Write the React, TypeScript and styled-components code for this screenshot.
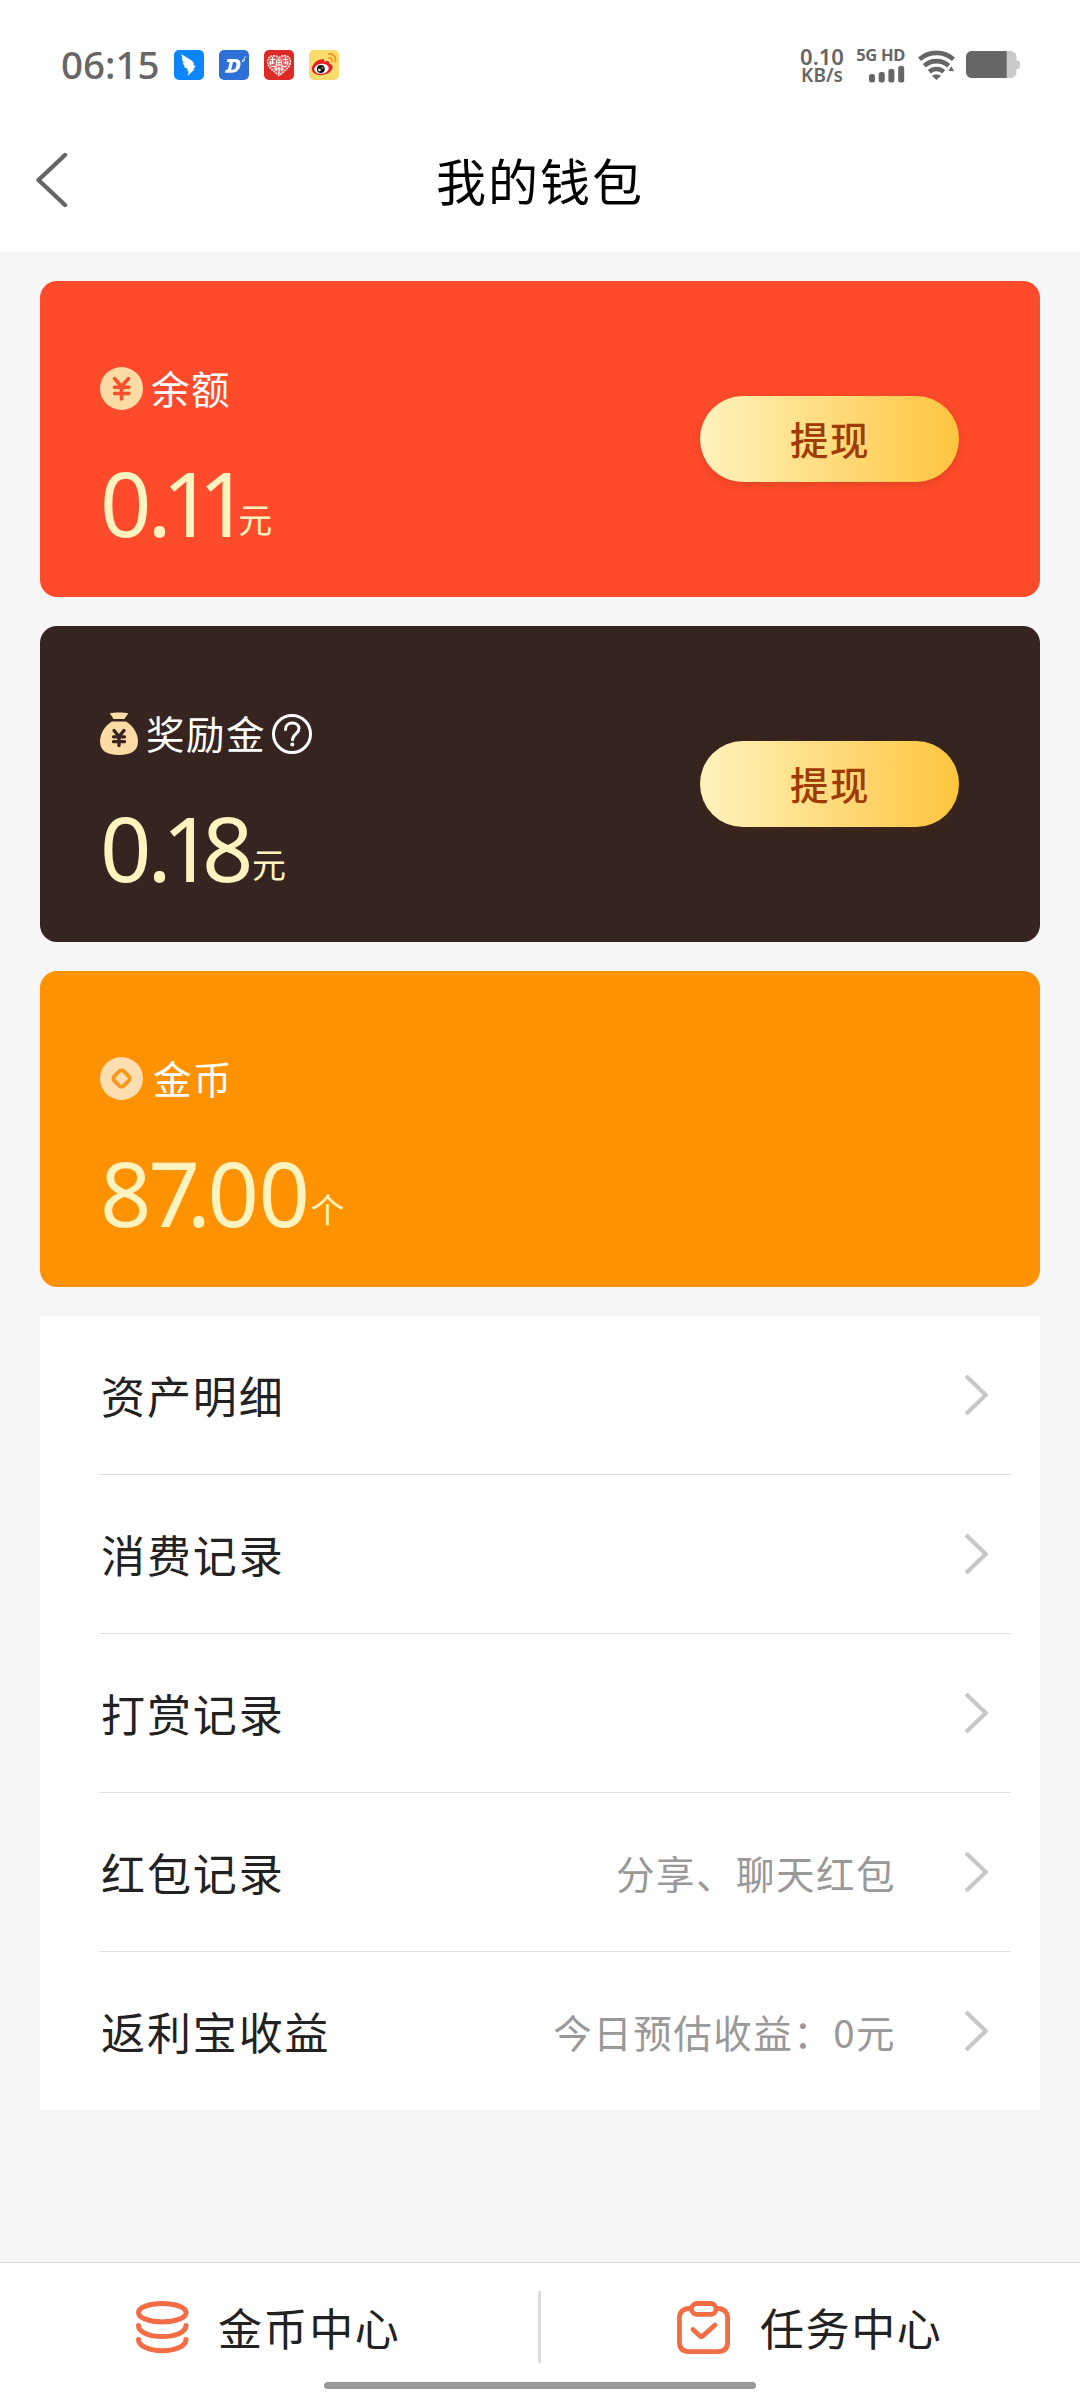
import React from "react";
import styled, { createGlobalStyle } from "styled-components";

const GlobalStyle = createGlobalStyle`
  * { box-sizing: border-box; }
  body {
    margin: 0;
    background: #f6f6f6;
    font-family: "Noto Sans CJK SC", "Noto Sans", sans-serif;
    -webkit-font-smoothing: antialiased;
  }
`;

const Page = styled.div`
  width: 1080px;
  height: 2392px;
  display: flex;
  flex-direction: column;
  background: #f6f6f6;
  overflow: hidden;
`;

const StatusBar = styled.header`
  height: 130px;
  padding: 0 60px 0 60px;
  display: flex;
  justify-content: space-between;
  align-items: center;
  background: #fff;
  color: #666;
  font-family: "Noto Sans", sans-serif;
  flex: none;
`;

const StatusGroup = styled.div<{ $gap: number }>`
  display: flex;
  align-items: center;
  gap: ${(p) => p.$gap}px;
`;

const Clock = styled.time`
  width: 99px;
  padding: 0 0 2px 1px;
  font-size: 38.5px;
  line-height: 40px;
  font-weight: 500;
  letter-spacing: 0;
`;

const NetSpeed = styled.div`
  width: 46px;
  margin-right: 12px;
  display: flex;
  flex-direction: column;
  align-items: center;
  font-weight: 600;
`;

const SpeedValue = styled.span`
  font-size: 22px;
  line-height: 20px;
`;

const SpeedUnit = styled.span`
  font-size: 19px;
  line-height: 19px;
`;

const Signal = styled.div`
  width: 48px;
  margin-right: 13px;
  display: flex;
  flex-direction: column;
  align-items: flex-end;
  gap: 4px;
`;

const SignalLabel = styled.span`
  font-size: 16.5px;
  line-height: 14px;
  font-weight: 700;
  letter-spacing: -0.3px;
  white-space: nowrap;
`;

const TitleBar = styled.div`
  height: 122px;
  padding: 0 36px 22px;
  display: grid;
  grid-template-columns: 40px 1fr 40px;
  align-items: center;
  background: #fff;
  flex: none;
`;

const Title = styled.h1`
  margin: 0;
  padding-bottom: 2px;
  text-align: center;
  font-size: 50px;
  line-height: 60px;
  font-weight: 400;
  letter-spacing: 2px;
  color: #000;
`;

const Content = styled.main`
  flex: 1;
  padding: 29px 40px 0;
  display: flex;
  flex-direction: column;
  gap: 29px;
`;

const Card = styled.section<{ $bg: string }>`
  height: 316px;
  padding: 86px 81px 0 60px;
  display: flex;
  justify-content: space-between;
  border-radius: 17px;
  background: ${(p) => p.$bg};
`;

const CardTitle = styled.div`
  height: 43px;
  display: flex;
  align-items: center;
`;

const CardName = styled.span<{ $gap: number }>`
  margin-left: ${(p) => p.$gap}px;
  padding-bottom: 2px;
  font-size: 38.5px;
  line-height: 43px;
  letter-spacing: 1.5px;
  color: #fff;
`;

const Amount = styled.div`
  height: 92px;
  margin-top: 46px;
  display: flex;
  align-items: flex-end;
  color: #fff3bf;
`;

const AmountValue = styled.span`
  font-family: "Noto Sans", sans-serif;
  font-size: 90px;
  line-height: 92px;
  font-kerning: none;
`;

const Digit = styled.span<{ $kern: number }>`
  letter-spacing: ${(p) => p.$kern}px;
`;

const Unit = styled.span`
  margin-bottom: 12px;
  font-size: 34px;
  line-height: 34px;
`;

const Withdraw = styled.button`
  width: 259px;
  height: 86px;
  margin-top: 29px;
  padding: 0 0 2px 1px;
  border: 0;
  border-radius: 43px;
  background: linear-gradient(90deg, #fff3bd, #ffc53d);
  box-shadow: 0 3px 8px rgba(120, 50, 0, 0.22);
  font-family: inherit;
  font-size: 38.5px;
  font-weight: 500;
  letter-spacing: 1.5px;
  color: #9e3b00;
`;

const List = styled.nav`
  height: 794px;
  padding: 0 29px 0 59px;
  display: flex;
  flex-direction: column;
  background: #fff;
`;

const Row = styled.a`
  height: 159px;
  flex: none;
  padding: 0 22px 0 1px;
  display: flex;
  align-items: center;
  border-bottom: 1px solid #e0e0e0;
  &:last-child {
    height: 158px;
    border-bottom: 0;
  }
`;

const RowLabel = styled.span`
  flex: 1;
  padding-left: 1px;
  font-size: 44px;
  line-height: 60px;
  letter-spacing: 1.9px;
  color: #222;
`;

const RowNote = styled.span`
  margin-right: 69px;
  font-size: 38.5px;
  line-height: 54px;
  letter-spacing: 1.5px;
  color: #999;
`;

const BottomBar = styled.footer`
  height: 130px;
  flex: none;
  display: grid;
  grid-template-columns: 538px 3px 539px;
  align-content: start;
  align-items: start;
  padding-top: 28px;
  border-top: 1px solid #dcdcdc;
  background: #fff;
`;

const Tab = styled.a<{ $gap: number }>`
  height: 72px;
  padding-left: 136px;
  display: flex;
  align-items: center;
  gap: ${(p) => p.$gap}px;
  font-size: 44px;
  line-height: 60px;
  letter-spacing: 1.6px;
  color: #222;
`;

const Divider = styled.i`
  height: 72px;
  background: #dcdcdc;
`;

const HomeIndicator = styled.i`
  grid-column: 1 / -1;
  justify-self: center;
  width: 432px;
  height: 7px;
  margin-top: 19px;
  border-radius: 4px;
  background: #999;
`;

/* Pair spacing for the large figures; the last digit is paired with the unit. */
const KERN: Record<string, number> = {
  "0.": -4,
  ".1": -9.5,
  "11": -15.3,
  "18": -11.5,
  "87": -3,
  "7.": -13.2,
  ".0": -3.4,
  "00": -0.5,
  "1": -11.5,
  "8": -1.5,
  "0": 0.5,
};

const Figure = ({ value }: { value: string }) => (
  <AmountValue>
    {value.split("").map((ch, i) => (
      <Digit key={i} $kern={KERN[value.slice(i, i + 2)] ?? 0}>
        {ch}
      </Digit>
    ))}
  </AmountValue>
);

const BirdIcon = () => (
  <svg width="30" height="30" viewBox="0 0 30 30">
    <rect width="30" height="30" rx="5" fill="#0d86fb" />
    <path d="M7.500 4c1.500 1.500 8 4.500 11 7.300 1.300 1.300 1.600 2.500 1 4.200l2.300.2-2.600 3.600h1.500L13.500 26l1.300-4.700h-1.700l.8-2.300c-2-.3-3.300-1.200-4-2.700l1.500-.1C9.600 15.200 8.700 14 8.500 12.500l1.500.4C8.500 11 7.900 9.500 7.800 8l1 .4C7.900 7 7.400 5.500 7.500 4z" fill="#fff" />
  </svg>
);

const DIcon = () => (
  <svg width="30" height="30" viewBox="0 0 30 30">
    <rect width="30" height="30" rx="5" fill="#2f6fd8" />
    <path fillRule="evenodd" d="M8.500 9H16c4.500 0 6.300 2.600 5.300 6.800-1.100 4.400-4 6.900-8.300 6.900H6l.7-3h2.100l1.800-7.700H7.800L8.500 9zm5.500 3-1.800 7.700h1.300c2 0 3.200-1.300 3.800-3.900.6-2.600 0-3.800-2-3.800H14z" fill="#fff" />
    <path d="M23.200 11.500c.2-1.500 1-2.200 2.300-2.100.6.700-.6 2-2.300 2.100zM25 8.500c.2-1.200 1-1.700 2.200-1.600" stroke="#fff" strokeWidth="1" fill="none" />
  </svg>
);

const HeartIcon = () => (
  <svg width="30" height="30" viewBox="0 0 30 30">
    <rect width="30" height="30" rx="5" fill="#dc2a26" />
    <path d="M15 8c2-3.500 11.500-3.500 11.500 3.500 0 6-6 9.500-11.500 14C9.500 21 3.500 17.500 3.500 11.500 3.500 4.500 13 4.500 15 8z" fill="#fff" fillOpacity=".25" stroke="#fff" strokeWidth="1.300" strokeDasharray="2 .8" />
    <path d="M6 9.500h5M5.500 13h5M7 16.500h5M19 9.500h5M19.500 13h5M18 16.500h5M8.500 7v7M21.500 7v7M12 15v6M18 15v6M10 19h10M15 17v7M6.500 11v4M23.500 11v4" stroke="#fff" strokeWidth="1.200" />
    <path d="M12.500 10h5v5h-5zM12 12.500h6M15 9v7" stroke="#fff" strokeWidth=".9" fill="none" />
  </svg>
);

const WeiboIcon = () => (
  <svg width="30" height="30" viewBox="0 0 30 30">
    <rect width="30" height="30" rx="5" fill="#fedc6b" />
    <path d="M12.500 9.500c2-1.200 3 .3 2.600 2.200 3-1.300 6-.8 5.300 2 3 .9 4 2.800 2.800 5.300-1.600 3.700-6.500 6-11.300 6-5.500 0-9.200-2.600-9.200-6.300 0-3.200 4.700-9.400 9.800-9.200z" fill="#e01f23" />
    <ellipse cx="12.500" cy="18.700" rx="7.300" ry="5" fill="#fff" transform="rotate(-8 12.500 18.700)" />
    <circle cx="11.800" cy="19" r="3.900" fill="#111" />
    <circle cx="10.500" cy="20" r="1.300" fill="#fff" />
    <circle cx="13.300" cy="17.900" r=".7" fill="#fff" />
    <path d="M19.800 3.800c4.600-.5 7.800 3.500 6.500 8.200M20 8c2.300-.3 3.500 1.300 2.800 3.500" stroke="#f5982b" strokeWidth="1.800" strokeLinecap="round" fill="none" />
  </svg>
);

const SignalBars = () => (
  <svg width="36" height="17" viewBox="0 0 36 17" fill="#666">
    <rect x="0" y="8" width="6" height="8.500" rx="2.500" />
    <rect x="9.700" y="6" width="6" height="10.500" rx="2.200" />
    <rect x="19.400" y="3" width="6" height="13.500" rx="2" />
    <rect x="29.200" y="0" width="6" height="16.500" rx="2" />
  </svg>
);

const WifiIcon = () => (
  <svg width="37" height="30" viewBox="0 0 37 30">
    <g fill="none" stroke="#666" strokeWidth="4.600">
      <path d="M1.500 9.200c9.500-8.500 24.500-8.500 34 0" />
      <path d="M6.300 15.800c7-6.300 17.400-6.300 24.400 0" />
      <path d="M11.300 21.800c4-3.700 10.400-3.700 14.400 0" />
    </g>
    <path d="M14 25.700c2.500-1.700 6.500-1.700 9 0L18.500 30z" fill="#666" />
    <path d="M29.800 21.500 33.200 15.500l3.600 6z" fill="#666" stroke="#fff" strokeWidth=".8" />
  </svg>
);

const BatteryIcon = () => (
  <svg width="54" height="28" viewBox="0 0 54 28">
    <path d="M40 0h4.500c3.500 0 6 2.500 6 6v3.500h1c1.500 0 2.500 1 2.500 2.300v3.900c0 1.300-1 2.300-2.500 2.300h-1V21c0 3.500-2.500 6-6 6H40z" fill="#cacaca" />
    <path d="M6 0h34.700v27H6c-3.500 0-6-2.500-6-6V6c0-3.500 2.500-6 6-6z" fill="#666" />
  </svg>
);

const BackIcon = () => (
  <svg width="32" height="56" viewBox="0 0 32 56">
    <path d="M29 3 2.500 28 29 53" fill="none" stroke="#666" strokeWidth="4.400" strokeLinecap="round" strokeLinejoin="round" />
  </svg>
);

const YenCoin = () => (
  <svg width="43" height="43" viewBox="0 0 43 43">
    <circle cx="21.500" cy="21.500" r="21.500" fill="#fddba5" />
    <path d="m14.500 11.500 7 8 7-8M21.500 19.500V32M14.500 20.300h14.500M14.500 26.500h14.500" stroke="#f94f2b" strokeWidth="3.500" strokeLinecap="round" fill="none" />
  </svg>
);

const MoneyBag = () => (
  <svg width="38" height="43" viewBox="0 0 38 43">
    <path d="M10 1.200C13 .1 25 .1 28 1.200c.3.900-2.300 3-3.300 5.800H13.300C12.500 4.200 9.800 2.200 10 1.200z" fill="#fddba5" />
    <path d="M12 9.600h14C33 14 38 21.500 38 29.500 38 38 32 43 19 43S0 38 0 29.500C0 21.500 5 14 12 9.600z" fill="#fddba5" />
    <path d="m14 18.500 5 6 5-6M19 24.500v9M13.500 24.800h11M13.500 29.700h11" stroke="#35241f" strokeWidth="3.300" strokeLinecap="round" fill="none" />
  </svg>
);

const GoldCoin = () => (
  <svg width="43" height="43" viewBox="0 0 43 43">
    <circle cx="21.500" cy="21.500" r="21.500" fill="#fddeb0" />
    <rect x="14.800" y="14.800" width="13.400" height="13.400" rx="3" transform="rotate(45 21.500 21.500)" fill="none" stroke="#f9971b" strokeWidth="3.600" />
  </svg>
);

const HelpIcon = styled.svg`
  margin-left: 6px;
`;

const Chevron = () => (
  <svg width="24" height="40" viewBox="0 0 24 40">
    <path d="M2.500 2.500 20.800 20 2.500 37.500" fill="none" stroke="#c8c8c8" strokeWidth="4.300" strokeLinecap="square" strokeLinejoin="round" />
  </svg>
);

const CoinsIcon = () => (
  <svg width="53" height="53" viewBox="0 0 53 53" fill="none" stroke="#f26c46" strokeWidth="5" strokeLinecap="round">
    <ellipse cx="26.300" cy="11.700" rx="23.800" ry="9.200" />
    <path d="M2.500 24.500C2.500 31 13 35.500 26.300 35.500S50 31 50 24.500" />
    <path d="M2.500 38.500C2.500 45 13 49.800 26.300 49.800S50 45 50 38.500" />
  </svg>
);

const TaskIcon = () => (
  <svg width="53" height="53" viewBox="0 0 53 53" fill="none" stroke="#f26c46" strokeWidth="4.800" strokeLinecap="round" strokeLinejoin="round">
    <path d="M12.500 7.500C6.500 7.500 2.400 10.500 2.400 17v24c0 6.500 3 9.600 9.600 9.600h29c6.500 0 9.600-3 9.600-9.600V17c0-6.500-4-9.500-10.100-9.500" />
    <rect x="14.500" y="2.500" width="24.500" height="10.800" rx="5.400" />
    <path d="m16 28.500 7 6.500c1 .9 1.800.9 2.800 0L38 24" />
  </svg>
);

const rows = [
  { label: "资产明细" },
  { label: "消费记录" },
  { label: "打赏记录" },
  { label: "红包记录", note: "分享、聊天红包" },
  { label: "返利宝收益", note: "今日预估收益：0元" },
];

export default function App() {
  return (
    <Page>
      <GlobalStyle />
      <StatusBar>
        <StatusGroup $gap={15}>
          <Clock>06:15</Clock>
          <BirdIcon />
          <DIcon />
          <HeartIcon />
          <WeiboIcon />
        </StatusGroup>
        <StatusGroup $gap={0}>
          <NetSpeed>
            <SpeedValue>0.10</SpeedValue>
            <SpeedUnit>KB/s</SpeedUnit>
          </NetSpeed>
          <Signal>
            <SignalLabel>5G HD</SignalLabel>
            <SignalBars />
          </Signal>
          <StatusGroup $gap={11}>
            <WifiIcon />
            <BatteryIcon />
          </StatusGroup>
        </StatusGroup>
      </StatusBar>
      <TitleBar>
        <BackIcon />
        <Title>我的钱包</Title>
      </TitleBar>
      <Content>
        <Card $bg="#ff4a2b">
          <div>
            <CardTitle>
              <YenCoin />
              <CardName $gap={8}>余额</CardName>
            </CardTitle>
            <Amount>
              <Figure value="0.11" />
              <Unit>元</Unit>
            </Amount>
          </div>
          <Withdraw>提现</Withdraw>
        </Card>
        <Card $bg="#35241f">
          <div>
            <CardTitle>
              <MoneyBag />
              <CardName $gap={8}>奖励金</CardName>
              <HelpIcon width="40" height="40" viewBox="0 0 40 40" fill="none" stroke="#fff" strokeLinecap="round">
                <circle cx="20" cy="20" r="18.500" strokeWidth="3" />
                <path d="M13.500 15.500c0-8.500 13.500-8.500 13.500-.8 0 5-6.500 5.300-6.500 11" strokeWidth="3" />
                <circle cx="20.300" cy="30.500" r="2" fill="#fff" stroke="none" />
              </HelpIcon>
            </CardTitle>
            <Amount>
              <Figure value="0.18" />
              <Unit>元</Unit>
            </Amount>
          </div>
          <Withdraw>提现</Withdraw>
        </Card>
        <Card $bg="#ff9200">
          <div>
            <CardTitle>
              <GoldCoin />
              <CardName $gap={10}>金币</CardName>
            </CardTitle>
            <Amount>
              <Figure value="87.00" />
              <Unit>个</Unit>
            </Amount>
          </div>
        </Card>
        <List>
          {rows.map((row) => (
            <Row key={row.label}>
              <RowLabel>{row.label}</RowLabel>
              {row.note && <RowNote>{row.note}</RowNote>}
              <Chevron />
            </Row>
          ))}
        </List>
      </Content>
      <BottomBar>
        <Tab $gap={29}>
          <CoinsIcon />
          金币中心
        </Tab>
        <Divider />
        <Tab $gap={30}>
          <TaskIcon />
          任务中心
        </Tab>
        <HomeIndicator />
      </BottomBar>
    </Page>
  );
}
